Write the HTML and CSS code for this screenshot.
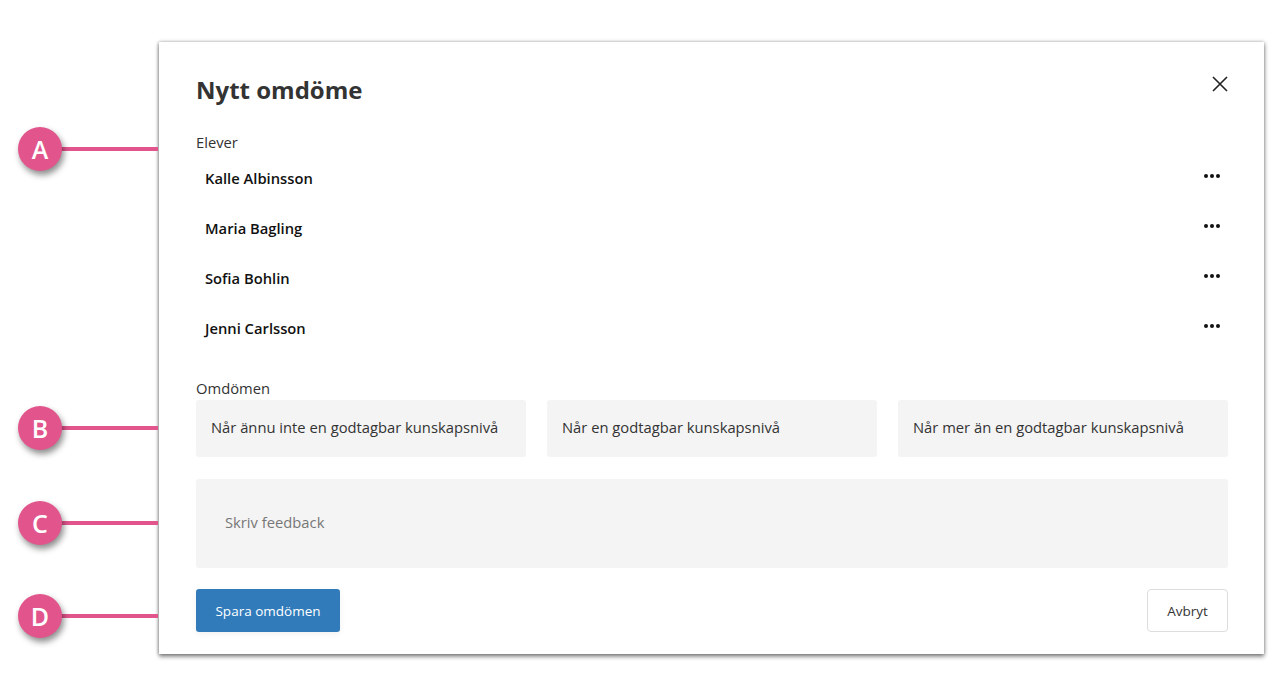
FILE: index.html
```html
<!DOCTYPE html>
<html lang="sv">
<head>
    <meta charset="UTF-8">
    <meta name="viewport" content="width=device-width, initial-scale=1.0">
    <link rel="stylesheet" href="styles.css">
</head>
<body>
    <!-- Callouts -->
    <div class="callout" style="top: 127px;"><span class="callout-dot">A</span><span class="callout-line"></span></div>
    <div class="callout" style="top: 406px;"><span class="callout-dot">B</span><span class="callout-line"></span></div>
    <div class="callout" style="top: 501px;"><span class="callout-dot">C</span><span class="callout-line"></span></div>
    <div class="callout" style="top: 594px;"><span class="callout-dot">D</span><span class="callout-line"></span></div>

    <!-- Modal -->
    <div class="modal">
        <div class="modal-header">
            <h1>Nytt omdöme</h1>
            <button class="close-btn" aria-label="Stäng">
                <svg width="16" height="16" viewBox="0 0 16 16"><path d="M1 1 L15 15 M15 1 L1 15" stroke="#222" stroke-width="1.6" fill="none"/></svg>
            </button>
        </div>

        <div class="section-label">Elever</div>
        <ul class="student-list">
            <li><span>Kalle Albinsson</span><span class="more"><i></i><i></i><i></i></span></li>
            <li><span>Maria Bagling</span><span class="more"><i></i><i></i><i></i></span></li>
            <li><span>Sofia Bohlin</span><span class="more"><i></i><i></i><i></i></span></li>
            <li><span>Jenni Carlsson</span><span class="more"><i></i><i></i><i></i></span></li>
        </ul>

        <div class="section-label">Omdömen</div>
        <div class="options">
            <div class="option">Når ännu inte en godtagbar kunskapsnivå</div>
            <div class="option">Når en godtagbar kunskapsnivå</div>
            <div class="option">Når mer än en godtagbar kunskapsnivå</div>
        </div>

        <div class="feedback">Skriv feedback</div>

        <div class="modal-footer">
            <button class="btn-primary">Spara omdömen</button>
            <button class="btn-secondary">Avbryt</button>
        </div>
    </div>
</body>
</html>
```

FILE: styles.css
```css
body {
    font-family: "Open Sans", "Noto Sans", sans-serif;
    margin: 0;
    padding: 0 0 43px 0;
    background-color: #fff;
    color: #222;
}

/* Callouts */
.callout {
    position: absolute;
    left: 18px;
    display: flex;
    align-items: center;
}

.callout-dot {
    width: 44px;
    height: 44px;
    border-radius: 50%;
    background-color: #e2548c;
    color: #fff;
    font-size: 25px;
    font-weight: 600;
    display: flex;
    align-items: center;
    justify-content: center;
    box-shadow: 2px 4px 6px rgba(0, 0, 0, 0.45);
    position: relative;
    z-index: 1;
}

.callout-line {
    width: 98px;
    height: 4px;
    background-color: #e2548c;
    margin-left: -2px;
}

/* Modal */
.modal {
    margin: 42px 0 0 159px;
    width: 1105px;
    box-sizing: border-box;
    padding: 32px 36px 22px 37px;
    background-color: #fff;
    box-shadow: 0 3px 4px rgba(0, 0, 0, 0.4), 1px 0 4px rgba(0, 0, 0, 0.2), -1px 0 3px rgba(0, 0, 0, 0.2);
}

.modal-header {
    display: flex;
    justify-content: space-between;
    align-items: flex-start;
}

.modal-header h1 {
    margin: 0;
    font-size: 24px;
    line-height: 32px;
    font-weight: 700;
    color: #333;
}

.close-btn {
    background: none;
    border: none;
    padding: 0;
    margin: 2px 0 0 0;
    cursor: pointer;
}

.section-label {
    font-size: 14.75px;
    line-height: 20px;
    color: #333;
    margin-top: 26px;
}

.student-list {
    list-style-type: none;
    margin: 0;
    padding: 0;
}

.student-list li {
    height: 50px;
    display: flex;
    align-items: center;
    justify-content: space-between;
    padding: 2px 0 0 9px;
    box-sizing: border-box;
    font-size: 14.75px;
    font-weight: 600;
    color: #111;
}

.more {
    display: flex;
    gap: 2px;
    margin-right: 8px;
    margin-top: -4px;
}

.more i {
    width: 4px;
    height: 4px;
    border-radius: 50%;
    background-color: #111;
}

.options {
    margin-top: 2px;
    display: grid;
    grid-template-columns: 1fr 1fr 1fr;
    gap: 21px;
}

.option {
    height: 57px;
    box-sizing: border-box;
    background-color: #f4f4f4;
    border-radius: 3px;
    display: flex;
    align-items: center;
    padding: 0 0 3px 15px;
    font-size: 14.75px;
    color: #333;
}

.feedback {
    margin-top: 22px;
    height: 89px;
    background-color: #f4f4f4;
    border-radius: 3px;
    box-sizing: border-box;
    padding: 0 0 3px 29px;
    display: flex;
    align-items: center;
    font-size: 14.75px;
    color: #777;
}

.modal-footer {
    margin-top: 21px;
    display: flex;
    justify-content: space-between;
}

.btn-primary {
    font-family: inherit;
    height: 43px;
    width: 144px;
    background-color: #317bbb;
    color: #fff;
    border: none;
    border-radius: 3px;
    font-size: 13.5px;
    cursor: pointer;
    box-shadow: 0 2px 6px rgba(0, 0, 0, 0.06);
}

.btn-secondary {
    font-family: inherit;
    height: 43px;
    width: 81px;
    background-color: #fff;
    color: #333;
    border: 1px solid #ddd;
    border-radius: 4px;
    font-size: 13.5px;
    cursor: pointer;
}
```
